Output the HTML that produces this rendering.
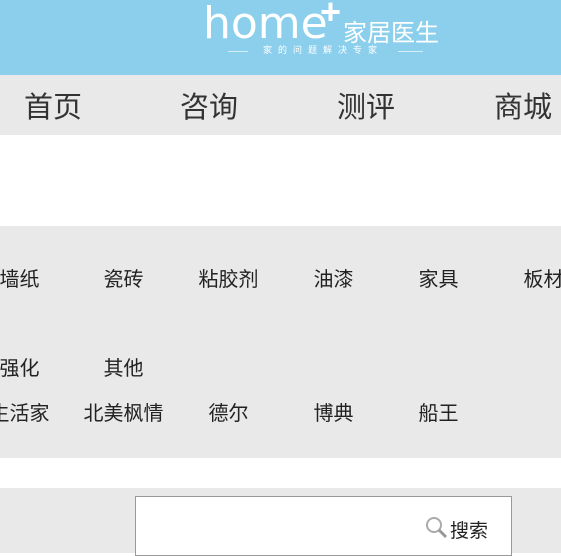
<!DOCTYPE html>
<html><head><meta charset="utf-8"><style>
*{margin:0;padding:0}
body{width:561px;height:553px;overflow:hidden;background:#fff;font-family:"Liberation Sans","Noto Sans CJK SC",sans-serif;position:relative}
.hd{position:absolute;left:0;top:0;width:561px;height:75px;background:#8ccfec}
.nav{position:absolute;top:75px;left:0;width:561px;height:60px;background:#e8e9e8}
.nav span{position:absolute;top:15px;font-size:29px;color:#333;line-height:36px}
.cat{position:absolute;top:226px;left:0;width:561px;height:232px;background:#e8e9e8}
.c{position:absolute;width:105px;text-align:center;font-size:20px;color:#222;line-height:24px}
.sb{position:absolute;top:488px;left:0;width:561px;height:65px;background:#e8e9e8}
.box{position:absolute;left:135px;top:496px;width:377px;height:60px;background:#fff;border:1px solid #999;box-sizing:border-box}
</style></head><body>
<div class="hd">
<div style="position:absolute;left:203px;top:-2px;color:#fff;font-size:44px;font-family:'DejaVu Sans',sans-serif">home</div>
<div style="position:absolute;left:320px;top:-9px;color:#fff;font-size:36px;font-weight:bold">+</div>
<div style="position:absolute;left:343px;top:13px;color:#fff;font-size:24px">家居医生</div>
<div style="position:absolute;left:228px;top:51px;width:195px;height:1px;background:#d5eef9"></div>
<div style="position:absolute;left:248px;top:45px;width:150px;height:11px;background:#8ccfec;color:#fff;font-size:9px;letter-spacing:6px;text-align:center;line-height:11px">家的问题解决专家</div>
</div>
<div class="nav"><span style="left:24px">首页</span><span style="left:180px">咨询</span><span style="left:337px">测评</span><span style="left:494px">商城</span></div>
<div class="cat">
<div class="c" style="left:-33px;top:42px">墙纸</div>
<div class="c" style="left:71px;top:42px">瓷砖</div>
<div class="c" style="left:176px;top:42px">粘胶剂</div>
<div class="c" style="left:281px;top:42px">油漆</div>
<div class="c" style="left:386px;top:42px">家具</div>
<div class="c" style="left:491px;top:42px">板材</div>
<div class="c" style="left:-33px;top:131px">强化</div>
<div class="c" style="left:71px;top:131px">其他</div>
<div class="c" style="left:-33px;top:176px">生活家</div>
<div class="c" style="left:71px;top:176px">北美枫情</div>
<div class="c" style="left:176px;top:176px">德尔</div>
<div class="c" style="left:281px;top:176px">博典</div>
<div class="c" style="left:386px;top:176px">船王</div>
</div>
<div class="sb"></div>
<div class="box">
<svg style="position:absolute;left:289px;top:19px" width="24" height="24" viewBox="0 0 24 24"><circle cx="9" cy="9" r="7" fill="none" stroke="#aaa" stroke-width="2"/><line x1="14" y1="14" x2="21" y2="21" stroke="#999" stroke-width="3"/></svg>
<div style="position:absolute;left:314px;top:19px;font-size:19px;color:#222">搜索</div>
</div>
</body></html>
